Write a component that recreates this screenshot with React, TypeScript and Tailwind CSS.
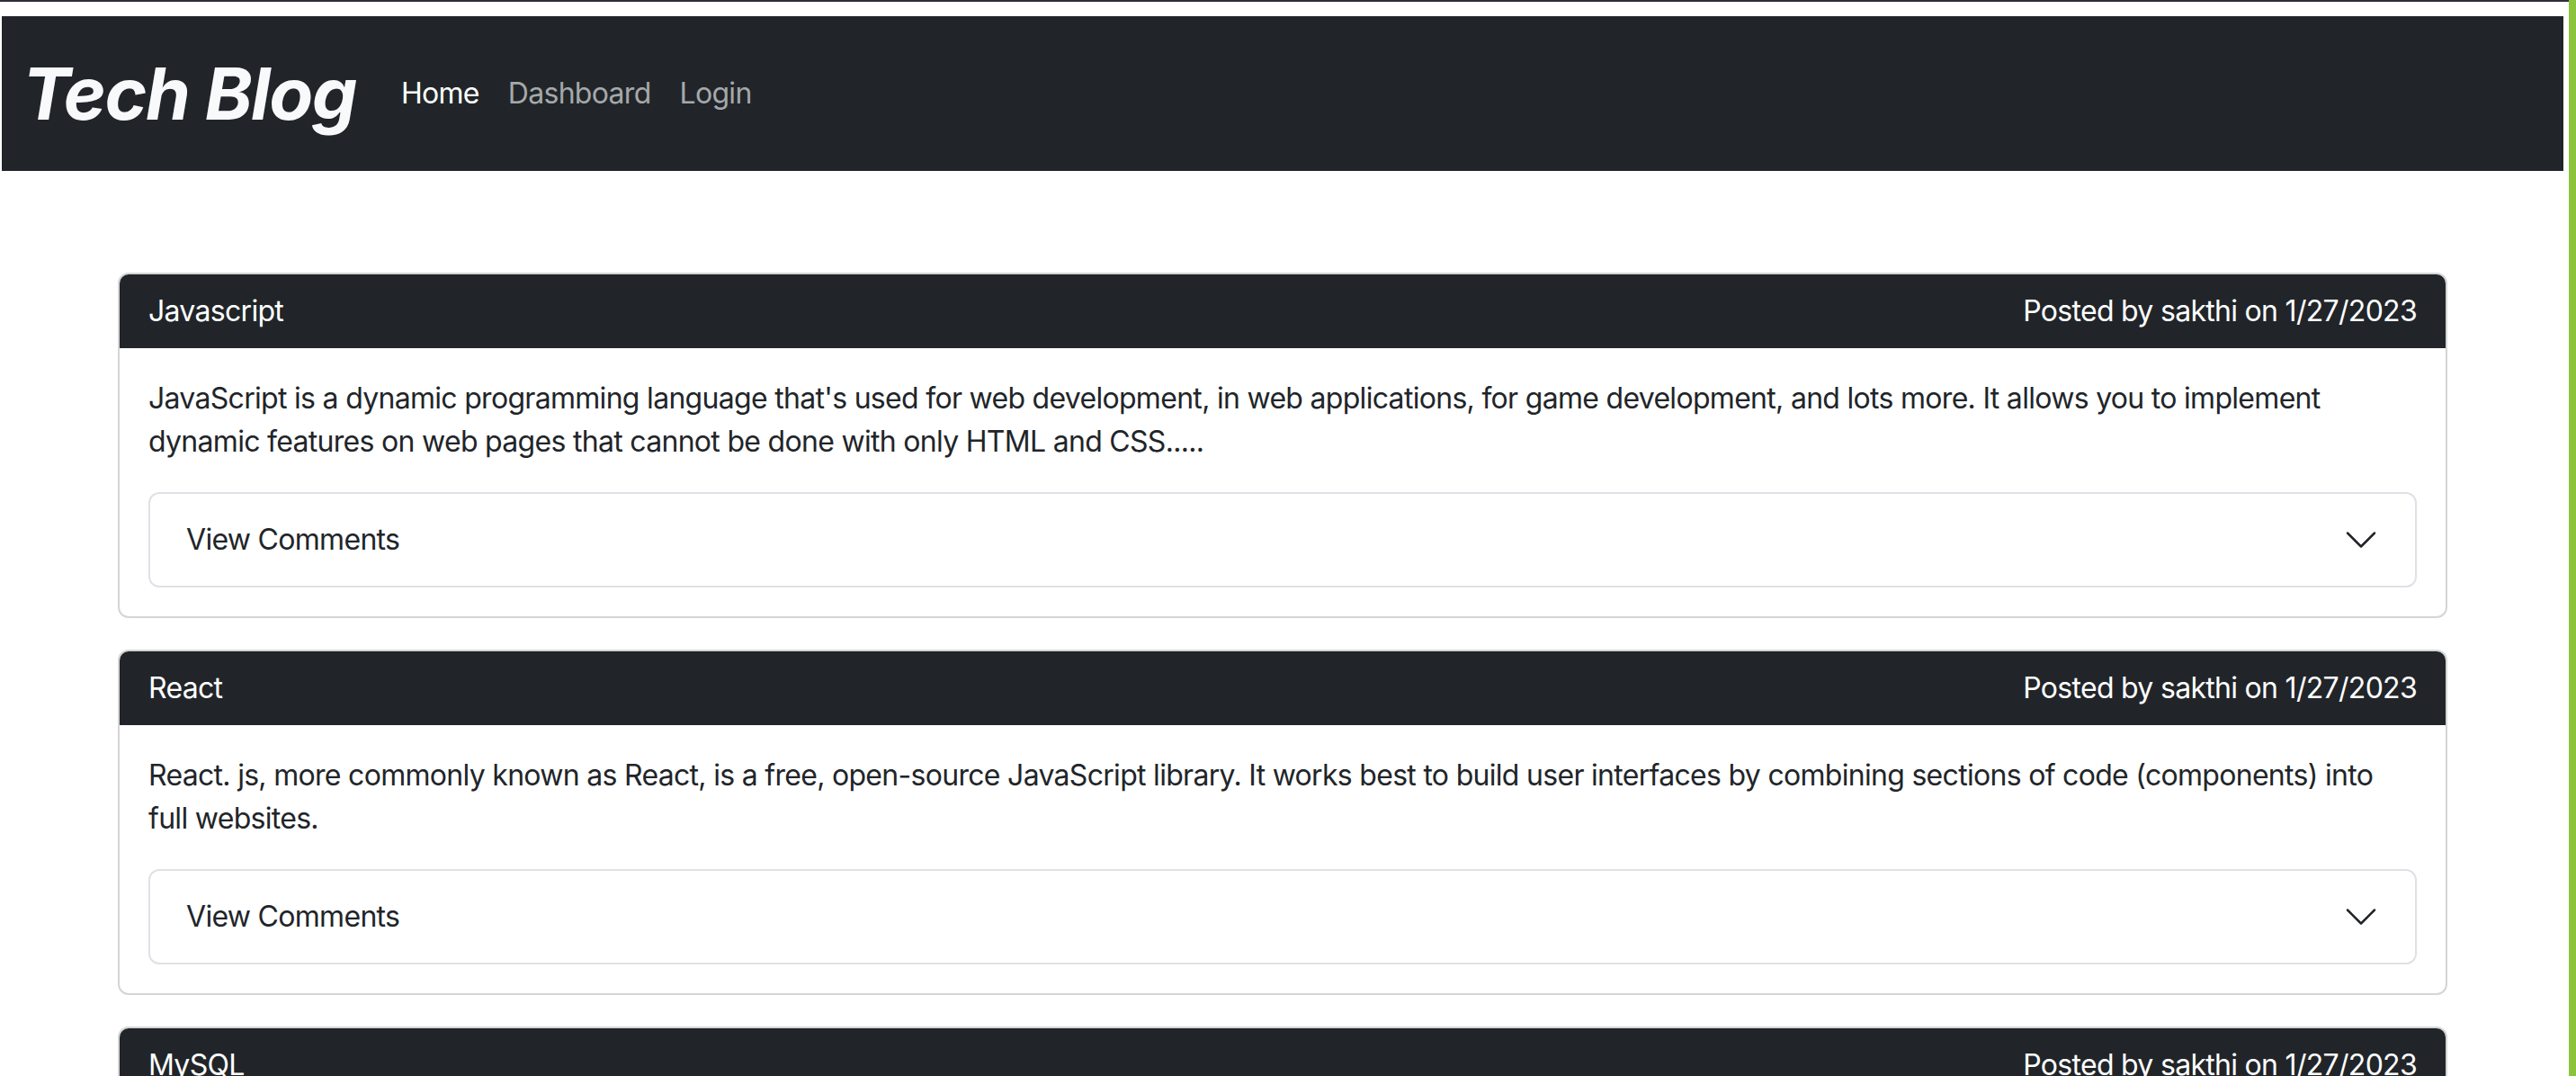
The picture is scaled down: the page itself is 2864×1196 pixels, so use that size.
import React from "react";

const POSTS = [
  {
    title: "Javascript",
    body: "JavaScript is a dynamic programming language that's used for web development, in web applications, for game development, and lots more. It allows you to implement dynamic features on web pages that cannot be done with only HTML and CSS.....",
  },
  {
    title: "React",
    body: "React. js, more commonly known as React, is a free, open-source JavaScript library. It works best to build user interfaces by combining sections of code (components) into full websites.",
  },
  {
    title: "MySQL",
    body: "MySQL is an open-source relational database management system. It stores data in tables and uses SQL to query and manage that data.",
  },
];

function Chevron() {
  return (
    <svg
      viewBox="0 0 16 16"
      className="h-[40px] w-[40px]"
      fill="none"
      stroke="#212529"
      strokeLinecap="round"
      strokeLinejoin="round"
    >
      <path d="M2 5L8 11L14 5" />
    </svg>
  );
}

function PostCard({ title, body }: { title: string; body: string }) {
  return (
    <div className="mb-[35px] overflow-hidden rounded-[12px] border-2 border-[#d5d5d6] bg-white">
      <div className="flex h-[82px] items-center justify-between bg-[#212529] px-[32px] text-[32px] text-white">
        <span>{title}</span>
        <span>Posted by sakthi on 1/27/2023</span>
      </div>
      <div className="p-[32px]">
        <p className="mb-[32px] pr-[16px] text-[32px] leading-[48px] text-[#212529]">{body}</p>
        <div className="flex h-[106px] items-center justify-between rounded-[12px] border-2 border-[#dee2e6] px-[40px]">
          <span className="text-[32px] text-[#212529]">View Comments</span>
          <Chevron />
        </div>
      </div>
    </div>
  );
}

export default function App() {
  return (
    <div
      className="flex min-h-screen bg-white tracking-[-0.7px]"
      style={{ fontFamily: '"Inter", "Liberation Sans", sans-serif' }}
    >
      <div className="flex-1 border-t-2 border-[#2d2e3b]">
        <nav className="ml-[2px] mr-[6px] mt-[16px] flex h-[172px] items-center bg-[#212529] pl-[23px]">
          <span className="mr-[34px] text-[80px] font-bold italic leading-none tracking-[-1.5px] text-[#f8f9fa]">
            Tech Blog
          </span>
          <a className="px-[16px] text-[32px] text-white">Home</a>
          <a className="px-[16px] text-[32px] text-[#a6a8aa]">Dashboard</a>
          <a className="px-[16px] text-[32px] text-[#a6a8aa]">Login</a>
        </nav>
        <main className="ml-[131px] w-[2590px] pt-[113px]">
          {POSTS.map((p) => (
            <PostCard key={p.title} title={p.title} body={p.body} />
          ))}
        </main>
      </div>
      <div className="w-[8px] bg-[#8cc33c]" />
    </div>
  );
}
